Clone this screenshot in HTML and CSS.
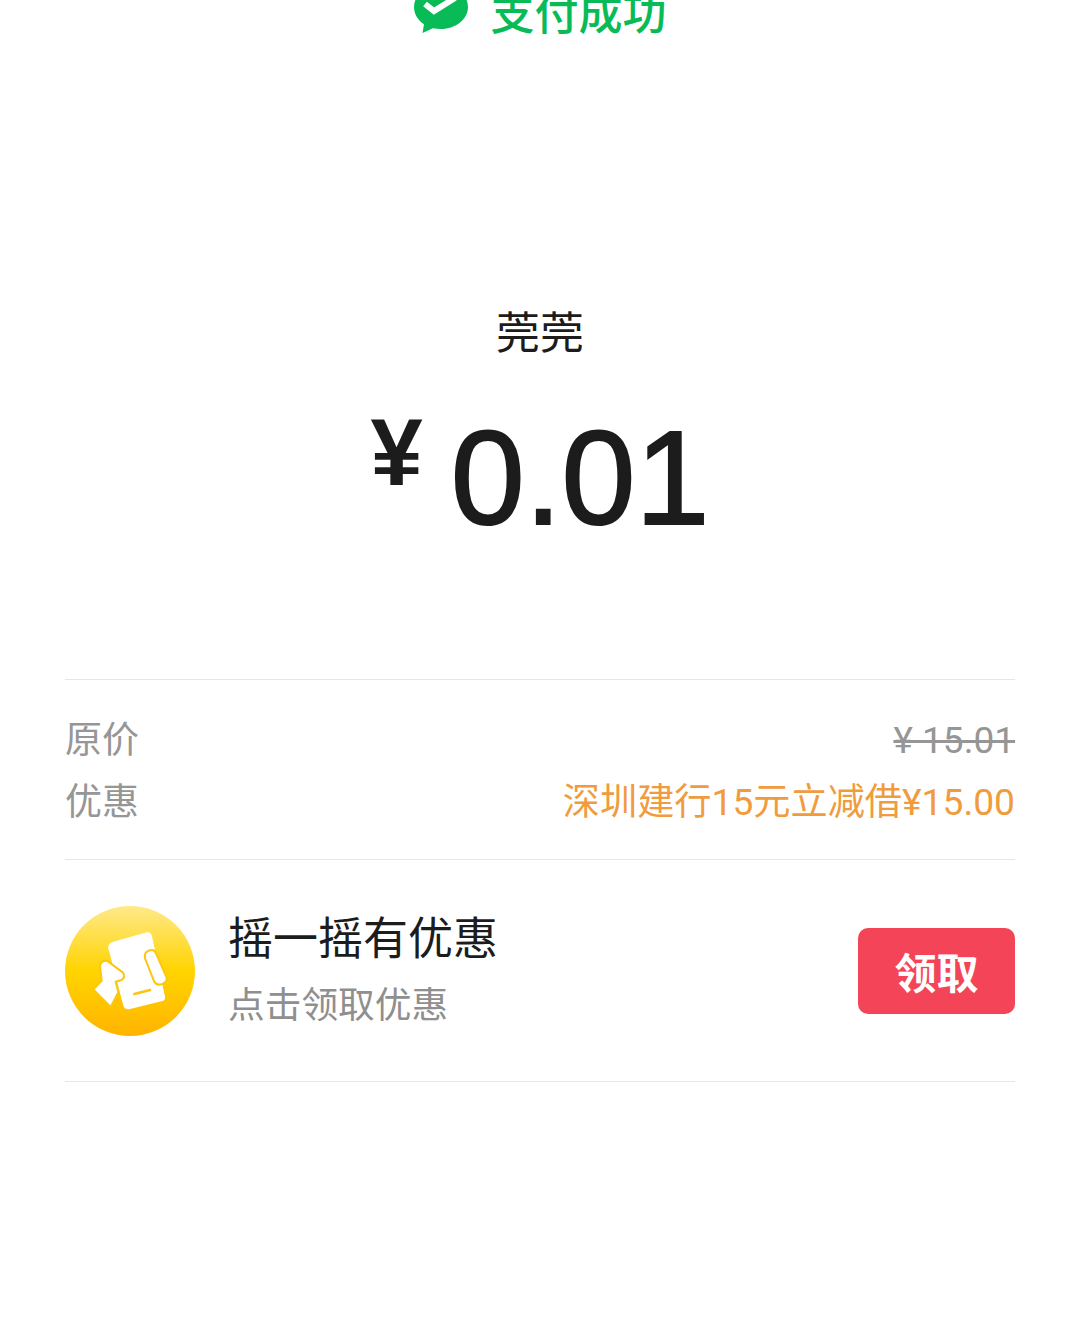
FILE: index.html
```html
<!DOCTYPE html>
<html lang="zh">
<head>
<meta charset="utf-8">
<title>支付成功</title>
<link rel="stylesheet" href="styles.css">
</head>
<body>
<main class="page">
  <header class="status">
    <svg class="status-icon" viewBox="0 0 54 48" width="54" height="48" aria-hidden="true">
      <path fill="#09bb56" d="M27 0C12 0 0 9.500 0 22c0 7 3.800 13.200 10 17.300L8.500 48l10.500-4.800c2.600.5 5.300.8 8 .8 15 0 27-9.800 27-22S42 0 27 0z"/>
      <path fill="none" stroke="#fff" stroke-width="6" d="M11 19l9 7 21-13"/>
    </svg>
    <span class="status-text">支付成功</span>
  </header>
  <div class="merchant">莞莞</div>
  <div class="amount"><span class="currency">¥</span><span class="value">0.01</span></div>
  <section class="details">
    <div class="row">
      <span class="label">原价</span>
      <span class="original">¥ 15.01</span>
    </div>
    <div class="row row-offer">
      <span class="label">优惠</span>
      <span class="offer">深圳建行15元立减借¥15.00</span>
    </div>
  </section>
  <section class="promo">
    <div class="promo-icon">
      <svg viewBox="45 33 390 390" width="130" height="130" aria-hidden="true">
        <path fill="#fff" d="M190 140L290 112Q303 110 306 124L345 305Q347 315 337 318L240 342Q225 345 220 332L175 160Q172 145 190 140Z"/>
        <path class="cut" fill="#fff" d="M288 172Q310 157 318 175L350 248Q352 262 335 268Q318 272 312 258L285 190Q283 178 288 172Z"/>
        <path class="cut" fill="#fff" d="M150 212Q155 195 172 198L218 232Q228 245 215 255L197 260L205 292L182 336L130 283L155 258Z"/>
        <path fill="none" stroke="#fcc412" stroke-width="8" d="M250 298L303 284"/>
      </svg>
    </div>
    <div class="promo-text">
      <div class="promo-title">摇一摇有优惠</div>
      <div class="promo-sub">点击领取优惠</div>
    </div>
    <button class="claim" type="button">领取</button>
  </section>
</main>
</body>
</html>
```
FILE: styles.css
```css
* { box-sizing: border-box; }
html, body { margin: 0; padding: 0; background: #fff; }
body {
  height: 1335px;
  overflow: hidden;
  font-family: "Roboto", "Noto Sans CJK SC", sans-serif;
  color: #1c1c1c;
}
.page { padding: 0 64px 0 65px; }
.status {
  display: flex;
  align-items: center;
  justify-content: center;
  gap: 23px;
  height: 70px;
  margin-top: -20px;
}
.status-icon { flex: none; margin-bottom: 12px; }
.status-text { font-size: 44px; line-height: 50px; font-weight: 500; color: #09bb56; }
.merchant {
  margin-top: 256px;
  text-align: center;
  font-size: 44px;
  line-height: 56px;
}
.amount {
  display: flex;
  justify-content: center;
  align-items: flex-start;
  gap: 28px;
  margin-top: 41px;
  height: 150px;
  font-family: "Liberation Sans", sans-serif;
}
.currency { font-size: 94px; line-height: 100px; font-weight: 700; }
.value { font-size: 133px; line-height: 150px; -webkit-text-stroke: 2px #1c1c1c; }
.details {
  margin-top: 126px;
  border-top: 1px solid #e7e7e7;
  border-bottom: 1px solid #e7e7e7;
  padding-top: 31px;
  height: 181px;
}
.row {
  display: flex;
  justify-content: space-between;
  align-items: center;
  height: 52px;
}
.row-offer { margin-top: 10px; }
.label { font-size: 37px; color: #969696; }
.original { font-size: 37px; padding-top: 6px; color: #969696; text-decoration: line-through; }
.offer { font-size: 37.200px; color: #f09c3e; }
.promo {
  display: flex;
  align-items: center;
  height: 222px;
  border-bottom: 1px solid #e7e7e7;
}
.promo-icon {
  flex: none;
  width: 130px;
  height: 130px;
  border-radius: 50%;
  background: linear-gradient(#ffe98a 0%, #ffd400 50%, #ffb400 100%);
}
.promo-icon svg { display: block; }
.cut { stroke: #fdc60f; stroke-width: 6; }
.promo-text { flex: 1; margin-left: 33px; }
.promo-title { font-size: 45px; line-height: 60px; color: #1c1c1c; }
.promo-sub { font-size: 36.700px; line-height: 50px; margin-top: 11px; color: #8f8f8f; }
.claim {
  flex: none;
  width: 157px;
  height: 86px;
  border: 0;
  border-radius: 10px;
  background: #f44558;
  color: #fff;
  font-family: inherit;
  font-size: 42px;
  font-weight: 700;
}
```
